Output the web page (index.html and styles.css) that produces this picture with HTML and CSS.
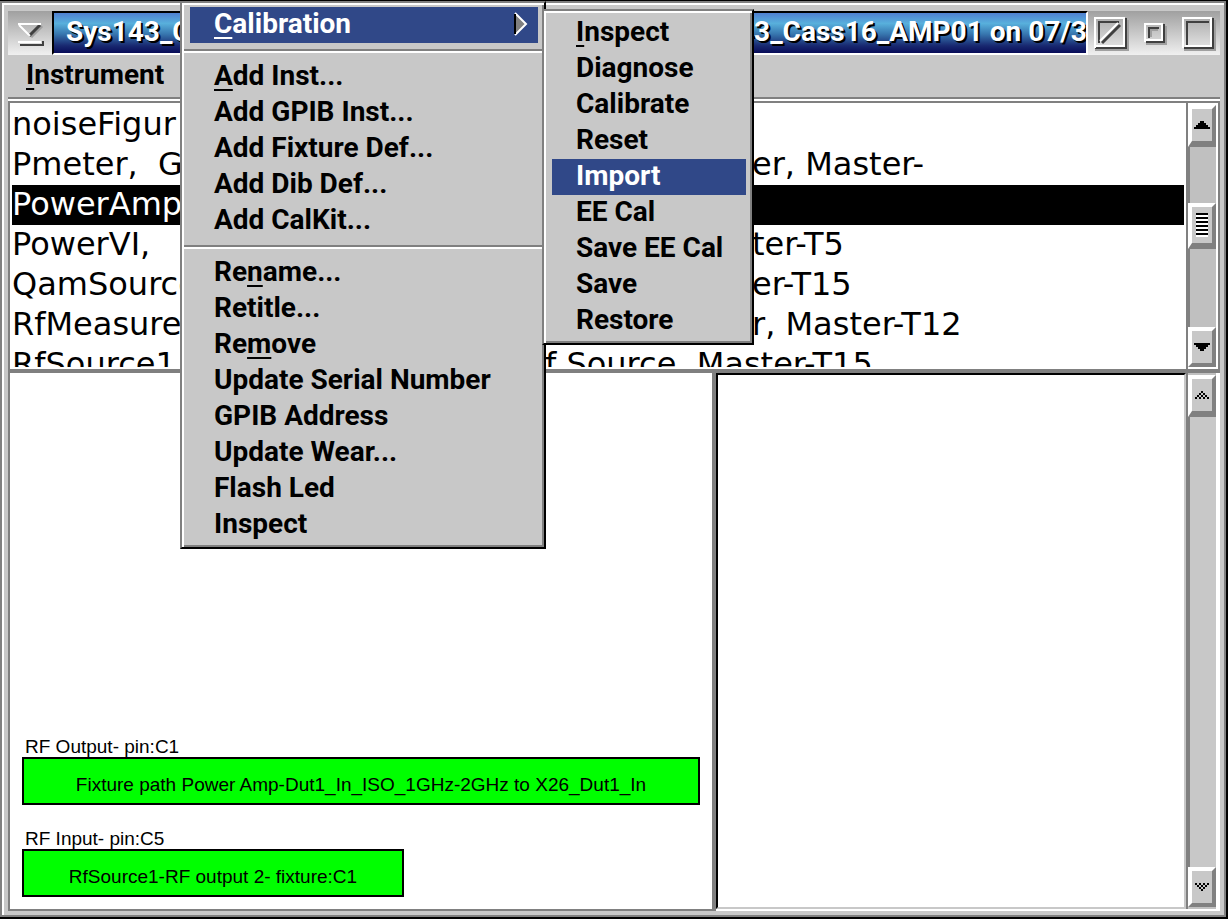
FILE: index.html
```html
<!DOCTYPE html>
<html lang="en">
<head>
    <meta charset="UTF-8">
    <meta name="viewport" content="width=device-width, initial-scale=1.0">
    <title>Instrument</title>
    <link rel="stylesheet" href="styles.css">
</head>
<body>
    <div class="window">
        <!-- Title bar -->
        <header class="titlebar">
            <button class="title-button" aria-label="Close">
                <svg width="44" height="44" viewBox="0 0 44 44">
                    <path d="M12 34h23v-4" stroke="#404040" stroke-width="2" fill="none"/>
                    <path d="M23 26l11-11" stroke="#a0a0a0" stroke-width="3"/>
                    <path d="M21 25l11-11" stroke="#404040" stroke-width="3"/>
                    <path d="M10 13h23M11 14l11 11" stroke="#fff" stroke-width="2" fill="none"/>
                    <path d="M10 31h23" stroke="#fff" stroke-width="2"/>
                </svg>
            </button>
            <h1 class="title-text">
                <span>Sys143_C</span>
                <span>43_Cass16_AMP01 on 07/3</span>
            </h1>
            <div class="window-buttons">
                <button class="title-button" aria-label="Shade">
                    <svg width="44" height="44" viewBox="0 0 44 44">
                        <path d="M7 39h33V9" stroke="#a0a0a0" stroke-width="2" fill="none"/>
                        <path d="M7 37h31V7" stroke="#404040" stroke-width="2" fill="none"/>
                        <path d="M7 37V7h29v28H8" stroke="#fff" stroke-width="2" fill="none"/>
                        <path d="M11 32V11h20" stroke="#404040" stroke-width="2" fill="none"/>
                        <path d="M14 32l18-18" stroke="#404040" stroke-width="3"/>
                        <path d="M12 30l18-18" stroke="#fff" stroke-width="2"/>
                    </svg>
                </button>
                <button class="title-button" aria-label="Minimize">
                    <svg width="44" height="44" viewBox="0 0 44 44">
                        <path d="M14 33h20V15" stroke="#a0a0a0" stroke-width="2" fill="none"/>
                        <path d="M14 31h18V13" stroke="#404040" stroke-width="2" fill="none"/>
                        <path d="M13 31V13h17v16H14" stroke="#fff" stroke-width="2" fill="none"/>
                        <path d="M17 27V17h10" stroke="#404040" stroke-width="2" fill="none"/>
                        <path d="M19 26V19h7" stroke="#a0a0a0" stroke-width="2" fill="none"/>
                    </svg>
                </button>
                <button class="title-button" aria-label="Maximize">
                    <svg width="44" height="44" viewBox="0 0 44 44">
                        <path d="M8 39h31V9" stroke="#a0a0a0" stroke-width="2" fill="none"/>
                        <path d="M8 37h29V7" stroke="#404040" stroke-width="2" fill="none"/>
                        <path d="M7 37V7h28v28H9" stroke="#fff" stroke-width="2" fill="none"/>
                        <path d="M11 34V11h22" stroke="#404040" stroke-width="2" fill="none"/>
                    </svg>
                </button>
            </div>
        </header>

        <!-- Menu bar -->
        <nav class="menubar">
            <button class="menubar-item"><u>I</u>nstrument</button>
        </nav>

        <!-- Instrument list -->
        <section class="list-pane">
            <ul class="list" role="listbox" aria-label="Instruments">
                <li class="row" role="option"><span>noiseFigur</span></li>
                <li class="row" role="option"><span>Pmeter,&nbsp; G</span><span>er, Master-</span></li>
                <li class="row selected" role="option" aria-selected="true"><span>PowerAmp</span></li>
                <li class="row" role="option"><span>PowerVI,</span><span>ter-T5</span></li>
                <li class="row" role="option"><span>QamSource</span><span>er-T15</span></li>
                <li class="row" role="option"><span>RfMeasure</span><span>r, Master-T12</span></li>
                <li class="row long" role="option"><span>RfSource1</span><span>f Source, Master-T15</span></li>
            </ul>
            <div class="scrollbar">
                <button class="scroll-button" aria-label="Scroll up">
                    <svg width="16" height="8" viewBox="0 0 16 8"><path d="M6 0h4v2h2v2h2v2h2v2H0V6h2V4h2V2h2z"/></svg>
                </button>
                <div class="track before"></div>
                <div class="thumb"><span class="grip"></span></div>
                <div class="track"></div>
                <button class="scroll-button down" aria-label="Scroll down">
                    <svg width="16" height="8" viewBox="0 0 16 8"><path d="M0 0h16v2h-2v2h-2v2h-2v2H6V6H4V4H2V2H0z"/></svg>
                </button>
            </div>
        </section>

        <!-- Paths and details -->
        <section class="panes">
            <div class="path-pane">
                <label for="outputPath">RF Output- pin:C1</label>
                <button class="path output" id="outputPath">Fixture path Power Amp-Dut1_In_ISO_1GHz-2GHz to X26_Dut1_In</button>
                <label for="inputPath">RF Input- pin:C5</label>
                <button class="path input" id="inputPath">RfSource1-RF output 2- fixture:C1</button>
            </div>
            <div class="detail-pane">
                <div class="detail"></div>
                <div class="scrollbar disabled">
                    <button class="scroll-button" aria-label="Scroll details up" disabled>
                        <svg width="14" height="8" viewBox="0 0 14 8"><path d="M6 0h2v2H6zM4 2h2v2H4zM8 2h2v2H8zM2 4h2v2H2zM6 4h2v2H6zM10 4h2v2h-2zM0 6h2v2H0zM4 6h2v2H4zM8 6h2v2H8zM12 6h2v2h-2z"/></svg>
                    </button>
                    <div class="track"></div>
                    <button class="scroll-button down" aria-label="Scroll details down" disabled>
                        <svg width="14" height="8" viewBox="0 0 14 8"><path d="M6 6h2v2H6zM4 4h2v2H4zM8 4h2v2H8zM2 2h2v2H2zM6 2h2v2H6zM10 2h2v2h-2zM0 0h2v2H0zM4 0h2v2H4zM8 0h2v2H8zM12 0h2v2h-2z"/></svg>
                    </button>
                </div>
            </div>
        </section>

        <!-- Open menu -->
        <div class="menu main-menu" role="menu">
            <button class="menu-item active" role="menuitem">
                <span><u>C</u>alibration</span>
                <svg width="14" height="24" viewBox="0 0 14 24">
                    <path d="M1 1l11 11L1 23z" fill="#808080"/>
                    <path d="M1 1l11 11L1 23" stroke="#fff" stroke-width="2" fill="none"/>
                    <path d="M1 2v20" stroke="#000" stroke-width="2"/>
                </svg>
            </button>
            <hr>
            <button class="menu-item" role="menuitem"><span><u>A</u>dd Inst...</span></button>
            <button class="menu-item" role="menuitem">Add GPIB Inst...</button>
            <button class="menu-item" role="menuitem">Add Fixture Def...</button>
            <button class="menu-item" role="menuitem">Add Dib Def...</button>
            <button class="menu-item" role="menuitem">Add CalKit...</button>
            <hr>
            <button class="menu-item" role="menuitem"><span>Re<u>n</u>ame...</span></button>
            <button class="menu-item" role="menuitem">Retitle...</button>
            <button class="menu-item" role="menuitem"><span>Re<u>m</u>ove</span></button>
            <button class="menu-item" role="menuitem">Update Serial Number</button>
            <button class="menu-item" role="menuitem">GPIB Address</button>
            <button class="menu-item" role="menuitem">Update Wear...</button>
            <button class="menu-item" role="menuitem">Flash Led</button>
            <button class="menu-item" role="menuitem">Inspect</button>
        </div>

        <div class="menu sub-menu" role="menu">
            <button class="menu-item" role="menuitem"><span><u>I</u>nspect</span></button>
            <button class="menu-item" role="menuitem">Diagnose</button>
            <button class="menu-item" role="menuitem">Calibrate</button>
            <button class="menu-item" role="menuitem">Reset</button>
            <button class="menu-item active" role="menuitem">Import</button>
            <button class="menu-item" role="menuitem">EE Cal</button>
            <button class="menu-item" role="menuitem">Save EE Cal</button>
            <button class="menu-item" role="menuitem">Save</button>
            <button class="menu-item" role="menuitem">Restore</button>
        </div>
    </div>
</body>
</html>
```

FILE: styles.css
```css
* {
    box-sizing: border-box;
}

body {
    margin: 0;
    background: #000;
    color: #000;
    font-family: Roboto, "Liberation Sans", sans-serif;
}

button {
    margin: 0;
    padding: 0;
    border: none;
    background: none;
    color: inherit;
    font: inherit;
}

u {
    text-decoration-thickness: 2px;
    text-underline-offset: 4px;
    text-decoration-skip-ink: none;
}

.window {
    position: relative;
    display: flex;
    flex-direction: column;
    height: 100vh;
    border-top: 1px solid #000;
    border-right: 2px solid #000;
    border-bottom: 2px solid #000;
    background: #c8c8c8;
    box-shadow: inset 2px 2px #808080, inset -2px -2px #808080, inset 4px 4px #fff;
    padding: 10px 6px 6px 8px;
    overflow: hidden;
}

/* Title bar */
.titlebar {
    display: flex;
    height: 44px;
    flex: none;
}

.title-button {
    width: 44px;
    height: 44px;
}

.title-button svg {
    display: block;
}

.titlebar > .title-button,
.window-buttons {
    background: linear-gradient(#a0a0a0, #f0f0f0);
}

.window-buttons {
    display: flex;
}

.title-text {
    flex: 1;
    min-width: 0;
    display: grid;
    grid-template-columns: 672px 1fr;
    margin: 0;
    padding-left: 12px;
    border: 2px solid;
    border-color: #000 #fff #fff #000;
    background: linear-gradient(#5080d0, #58b0dc 26%, #3878b0 52%, #182870 82%, #080c58);
    color: #fff;
    font-size: 28px;
    font-weight: 700;
    line-height: 38px;
    text-shadow: 2px 2px #000;
    white-space: nowrap;
    overflow: hidden;
}

/* Menu bar */
.menubar {
    flex: none;
    height: 44px;
    padding: 0 18px;
    border-bottom: 2px solid #808080;
}

.menubar-item {
    font-size: 28px;
    font-weight: 700;
    line-height: 40px;
}

/* Instrument list */
.list-pane {
    display: flex;
    flex: none;
    height: 270px;
    margin-top: 2px;
    border: 2px solid #808080;
    background: #fff;
    box-shadow: 0 -2px #fff;
}

.list {
    flex: 1;
    min-width: 0;
    height: 264px;
    margin: 0;
    padding: 2px;
    list-style: none;
    overflow: hidden;
}

.row {
    display: grid;
    grid-template-columns: 740px 1fr;
    height: 40px;
    font-family: "DejaVu Sans", Verdana, sans-serif;
    font-size: 32px;
    line-height: 38px;
    white-space: nowrap;
}

.row.long {
    grid-template-columns: 533px 1fr;
}

.row.selected {
    background: #000;
    color: #fff;
}

/* Scroll bars */
.scrollbar {
    display: flex;
    flex-direction: column;
    flex: none;
    width: 32px;
    padding: 2px 0;
    border-left: 2px solid #808080;
    border-right: 2px solid #fff;
    background: #c0c0c0;
}

.list-pane .scrollbar {
    background: #fff;
}

.scroll-button,
.thumb {
    display: flex;
    align-items: center;
    justify-content: center;
    flex: none;
    height: 42px;
    border: 4px solid;
    border-color: #fff #808080 #808080 #fff;
    border-bottom-width: 6px;
    background: #c8c8c8;
}

.scroll-button.down {
    height: 40px;
    border-bottom-width: 4px;
}

.thumb {
    height: 46px;
}

.grip {
    width: 12px;
    height: 24px;
    background: repeating-linear-gradient(#000 0 2px, #fff 2px 4px);
}

.track {
    flex: 1;
    border-left: 2px solid #808080;
    background: #c0c0c0;
}

.track.before {
    flex: none;
    height: 56px;
}

/* Lower panes */
.panes {
    display: flex;
    flex: 1;
    min-height: 0;
    border-top: 2px solid #808080;
}

.path-pane {
    display: flex;
    flex-direction: column;
    align-items: flex-start;
    justify-content: flex-end;
    width: 708px;
    padding: 0 12px 12px;
    border: solid #808080;
    border-width: 0 4px 2px 2px;
    background: #fff;
    font-family: "Liberation Sans", Arial, sans-serif;
    font-size: 19px;
}

.path-pane label {
    padding-left: 3px;
    line-height: 20px;
}

.path {
    height: 48px;
    border: 2px solid #000;
    background: #0f0;
    line-height: 22px;
    padding-top: 8px;
    white-space: nowrap;
}

.path.output {
    width: 100%;
    margin-bottom: 24px;
}

.path.input {
    width: 382px;
}

.detail-pane {
    display: flex;
    flex: 1;
    min-width: 0;
    border-bottom: 2px solid #fff;
    background: #c8c8c8;
}

.detail {
    flex: 1;
    border: 2px solid;
    border-color: #000 #c8c8c8 #c8c8c8 #000;
    background: #fff;
}

.scrollbar.disabled {
    width: 34px;
    border-right-width: 4px;
}

.scrollbar.disabled .track {
    background: #c8c8c8;
}

.scroll-button:disabled {
    color: #000;
}

/* Menus */
.menu {
    position: absolute;
    display: flex;
    flex-direction: column;
    padding: 4px 6px 4px 8px;
    border: 2px solid;
    border-color: #808080 #000 #000 #808080;
    background: #c8c8c8;
    box-shadow: inset 2px 2px #fff, inset -2px -2px #808080;
}

.main-menu {
    top: 0;
    left: 180px;
    width: 366px;
}

.sub-menu {
    top: 8px;
    left: 542px;
    width: 212px;
}

.menu-item {
    display: flex;
    align-items: center;
    justify-content: space-between;
    height: 36px;
    padding: 0 10px 2px 24px;
    font-size: 28px;
    font-weight: 700;
    line-height: 32px;
    text-align: left;
    white-space: nowrap;
}

.menu-item.active {
    background: #304888;
    color: #fff;
}

.menu hr {
    margin: 6px -6px;
    height: 4px;
    border: none;
    border-top: 2px solid #808080;
    background: #fff;
}
```
